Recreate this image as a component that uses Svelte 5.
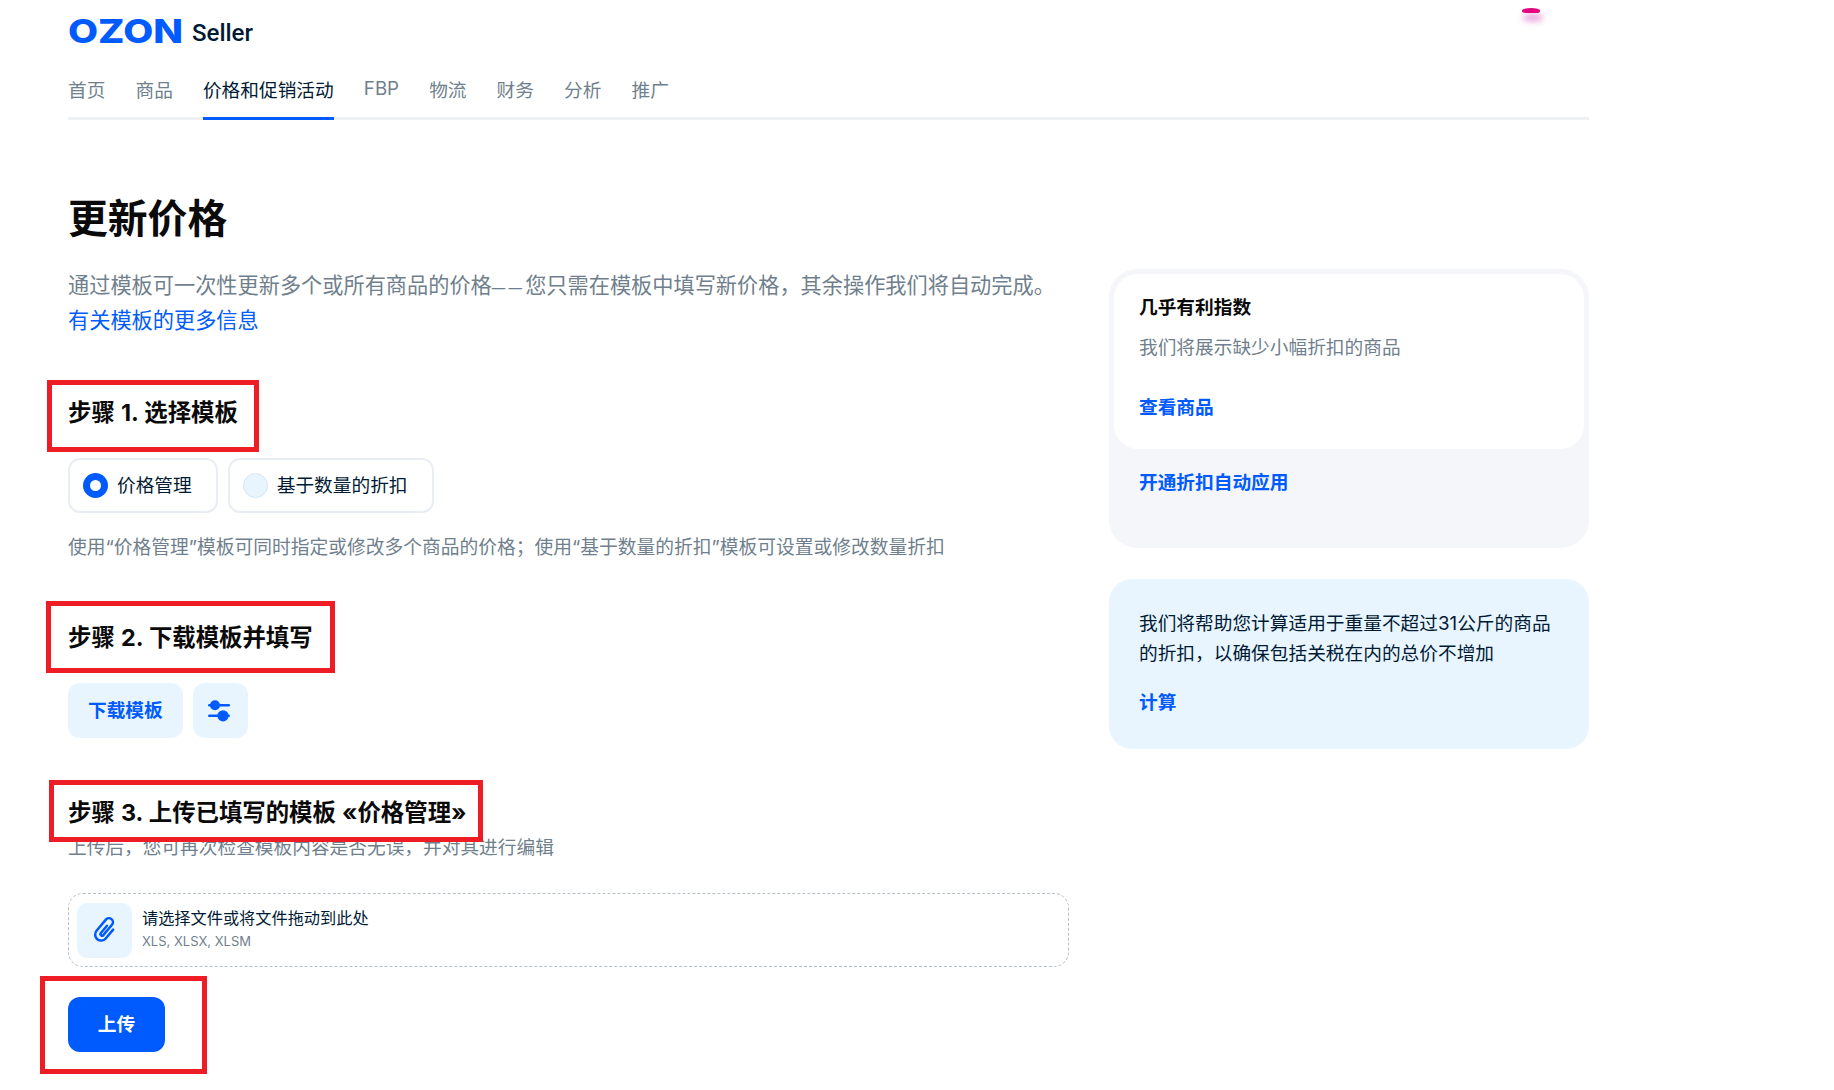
<script lang="ts">
  const navItems = ['首页', '商品', '价格和促销活动', 'FBP', '物流', '财务', '分析', '推广'];
  const activeNav = '价格和促销活动';

  let template = $state('price');
</script>

<div class="page">
  <header class="brand">
    <span class="ozon">OZON</span>
    <span class="seller">Seller</span>
  </header>
  <div class="blob"></div>

  <nav class="nav">
    {#each navItems as item}
      <a href="#top" class="nav-item" class:active={item === activeNav}>{item}</a>
    {/each}
  </nav>

  <h1>更新价格</h1>

  <div class="columns">
    <main class="main">
      <p class="lead">
        通过模板可一次性更新多个或所有商品的价格<span class="dash">——</span>您只需在模板中填写新价格，其余操作我们将自动完成。
        <a href="#top" class="lead-link">有关模板的更多信息</a>
      </p>

      <h2 class="step step-1"><span class="mark"></span>步骤 1. 选择模板</h2>
      <div class="radios">
        <button class="radio-card" onclick={() => (template = 'price')}>
          <span class="radio" class:on={template === 'price'}></span>价格管理
        </button>
        <button class="radio-card" onclick={() => (template = 'qty')}>
          <span class="radio" class:on={template === 'qty'}></span>基于数量的折扣
        </button>
      </div>
      <p class="hint">使用“价格管理”模板可同时指定或修改多个商品的价格；使用“基于数量的折扣”模板可设置或修改数量折扣</p>

      <h2 class="step step-2"><span class="mark"></span>步骤 2. 下载模板并填写</h2>
      <div class="actions">
        <button class="btn-soft">下载模板</button>
        <button class="btn-soft btn-icon" aria-label="设置">
          <svg width="24" height="24" viewBox="0 0 24 24" fill="#005bff">
            <rect x="1" y="5" width="22" height="2.4" rx="1.2" />
            <rect x="1" y="15.6" width="22" height="2.4" rx="1.2" />
            <circle cx="8" cy="6.2" r="5" />
            <circle cx="16" cy="16.8" r="5.6" />
          </svg>
        </button>
      </div>

      <h2 class="step step-3"><span class="mark"></span>步骤 3. 上传已填写的模板 «价格管理»</h2>
      <p class="sub">上传后，您可再次检查模板内容是否无误，并对其进行编辑</p>

      <div class="drop">
        <span class="clip">
          <svg width="26" height="30" viewBox="0 0 26 30" fill="none" stroke="#005bff" stroke-width="2.5" stroke-linecap="round">
            <g transform="rotate(40 13 15)">
              <path d="M19 9.500V21a6 6 0 0 1-12 0V6.500a4 4 0 0 1 8 0V20a1.600 1.600 0 0 1-3.200 0V10.500" />
            </g>
          </svg>
        </span>
        <span class="drop-text">
          <span class="drop-title">请选择文件或将文件拖动到此处</span>
          <span class="drop-types">XLS, XLSX, XLSM</span>
        </span>
      </div>

      <div class="submit-wrap">
        <span class="mark"></span>
        <button class="btn-primary">上传</button>
      </div>
    </main>

    <aside class="side">
      <section class="panel-grey">
        <div class="panel-inner">
          <h3>几乎有利指数</h3>
          <p>我们将展示缺少小幅折扣的商品</p>
          <a href="#top" class="side-link">查看商品</a>
        </div>
        <a href="#top" class="side-link auto">开通折扣自动应用</a>
      </section>

      <section class="panel-blue">
        <p>我们将帮助您计算适用于重量不超过31公斤的商品的折扣，以确保包括关税在内的总价不增加</p>
        <a href="#top" class="side-link">计算</a>
      </section>
    </aside>
  </div>
</div>

<style>
  :global(body) {
    margin: 0;
    background: #fff;
  }

  .page {
    position: relative;
    box-sizing: border-box;
    width: 1657px;
    height: 1090px;
    overflow: hidden;
    padding: 0 68px;
    font-family: Inter, "Noto Sans CJK SC", sans-serif;
    color: #001a34;
  }

  /* Header */
  .brand {
    display: flex;
    align-items: flex-end;
    height: 46px;
    gap: 12px;
  }
  .ozon {
    display: inline-block;
    width: 112px;
    font-weight: 800;
    font-size: 33px;
    line-height: 30px;
    height: 30px;
    color: #005bff;
    transform: scaleX(1.18);
    transform-origin: left center;
  }
  .seller {
    font-family: Roboto, sans-serif;
    font-weight: 500;
    font-size: 24px;
    line-height: 26px;
    color: #001a34;
  }
  .blob {
    position: absolute;
    left: 1522px;
    top: 8px;
    width: 18px;
    height: 5px;
    border-radius: 50% 50% 30% 30%;
    background: #e3067f;
    box-shadow: 2px 7px 6px 1px rgba(200, 40, 170, 0.45);
  }

  /* Nav */
  .nav {
    display: flex;
    gap: 30.100px;
    box-sizing: border-box;
    width: 1521px;
    height: 74px;
    border-bottom: 3px solid #edf0f4;
  }
  .nav-item {
    display: flex;
    align-items: center;
    box-sizing: border-box;
    height: 74px;
    padding-top: 14px;
    font-size: 18.700px;
    color: #707f8d;
    text-decoration: none;
    border-bottom: 3px solid transparent;
  }
  .nav-item.active {
    color: #001a34;
    border-bottom-color: #005bff;
  }

  h1 {
    margin: 69px 0 0;
    font-size: 39.800px;
    line-height: 60px;
    font-weight: 700;
    color: #0a0a0a;
  }

  .columns {
    display: grid;
    grid-template-columns: 1001px 480px;
    gap: 40px;
    margin-top: 19px;
  }

  /* Main column */
  .lead {
    margin: 0;
    font-size: 21.200px;
    line-height: 34px;
    color: #707f8d;
    white-space: nowrap;
  }
  .dash {
    font-size: 13.500px;
    font-weight: 500;
    letter-spacing: 3.200px;
  }
  .lead-link {
    display: block;
    margin-top: -2px;
    color: #005bff;
    text-decoration: none;
  }

  .step {
    position: relative;
    z-index: 1;
    margin: 0;
    font-size: 23.400px;
    line-height: 30px;
    font-weight: 700;
    word-spacing: 0.600px;
    color: #0a0a0a;
  }
  .step-1 { margin-top: 61px; }
  .step-2 { margin-top: 61px; }
  .step-3 { margin-top: 60px; }

  .mark {
    position: absolute;
    z-index: -1;
    box-sizing: border-box;
    border: 5px solid #ee1c25;
    background: #fff;
  }
  .step-1 .mark { left: -21px; top: -18px; width: 212px; height: 72px; }
  .step-2 .mark { left: -22px; top: -22px; width: 289px; height: 72px; }
  .step-3 .mark { left: -19px; top: -18px; width: 434px; height: 62px; }

  .radios {
    display: flex;
    gap: 10px;
    margin-top: 30px;
  }
  .radio-card {
    display: flex;
    align-items: center;
    gap: 9px;
    height: 55px;
    padding: 0 24px 4px 13px;
    box-sizing: border-box;
    background: #fff;
    border: 2px solid #e9eef4;
    border-radius: 12px;
    font: inherit;
    font-size: 18.700px;
    color: #001a34;
  }
  .radio {
    box-sizing: border-box;
    width: 25px;
    height: 25px;
    margin-top: 4px;
    border-radius: 50%;
    background: #e8f5ff;
    border: 1px solid #d3e6f4;
  }
  .radio.on {
    background: #fff;
    border: 7px solid #005bff;
  }

  .hint {
    margin: 21px 0 0;
    font-size: 18.750px;
    line-height: 28px;
    color: #707f8d;
    white-space: nowrap;
  }

  .actions {
    display: flex;
    gap: 10px;
    margin-top: 30px;
  }
  .btn-soft {
    height: 55px;
    padding: 0 20px 5px;
    border: 0;
    border-radius: 12px;
    background: #e8f5ff;
    font: inherit;
    font-size: 18.700px;
    font-weight: 700;
    color: #005bff;
  }
  .btn-icon {
    width: 55px;
    padding: 0 2px 0 0;
    display: flex;
    align-items: center;
    justify-content: center;
  }

  .sub {
    margin: 6px 0 0;
    font-size: 18.700px;
    line-height: 28px;
    color: #707f8d;
    white-space: nowrap;
  }

  .drop {
    display: flex;
    align-items: center;
    gap: 10px;
    height: 74px;
    margin-top: 31px;
    padding-left: 8px;
    box-sizing: border-box;
    border: 1px dashed #b4bfca;
    border-radius: 15px;
  }
  .clip {
    display: flex;
    align-items: center;
    justify-content: center;
    width: 55px;
    height: 55px;
    border-radius: 10px;
    background: #e8f5ff;
  }
  .drop-text {
    display: flex;
    flex-direction: column;
  }
  .drop-title {
    font-size: 16.200px;
    line-height: 23px;
    color: #001a34;
  }
  .drop-types {
    font-size: 13px;
    line-height: 23px;
    color: #707f8d;
  }

  .submit-wrap {
    position: relative;
    z-index: 1;
    margin-top: 30px;
    height: 55px;
  }
  .submit-wrap .mark { left: -28px; top: -21px; width: 167px; height: 98px; }
  .btn-primary {
    display: block;
    width: 97px;
    height: 55px;
    padding: 0 0 5px;
    border: 0;
    border-radius: 12px;
    background: #005bff;
    color: #fff;
    font: inherit;
    font-size: 18.700px;
    font-weight: 700;
  }

  /* Side column */
  .side {
    display: flex;
    flex-direction: column;
    gap: 31px;
    margin-top: 1px;
  }
  .panel-grey {
    height: 279px;
    box-sizing: border-box;
    padding: 5px;
    border-radius: 28px;
    background: #f5f6fa;
  }
  .panel-inner {
    box-sizing: border-box;
    height: 175px;
    padding: 21px 25px 0;
    border-radius: 24px;
    background: #fff;
  }
  h3 {
    margin: 0;
    font-size: 18.700px;
    line-height: 26px;
    font-weight: 700;
    color: #0a0a0a;
  }
  .panel-inner p {
    margin: 14px 0 0;
    font-size: 18.700px;
    line-height: 26px;
    color: #707f8d;
  }
  .side-link {
    display: block;
    font-size: 18.700px;
    line-height: 26px;
    font-weight: 700;
    color: #005bff;
    text-decoration: none;
  }
  .panel-inner .side-link { margin-top: 34px; }
  .side-link.auto { margin: 21px 0 0 25px; }

  .panel-blue {
    box-sizing: border-box;
    height: 170px;
    padding: 30px 30px 0;
    border-radius: 23px;
    background: #e8f5ff;
  }
  .panel-blue p {
    margin: 0;
    font-size: 18.700px;
    line-height: 30px;
    color: #001a34;
  }
  .panel-blue .side-link { margin-top: 21px; }
</style>
